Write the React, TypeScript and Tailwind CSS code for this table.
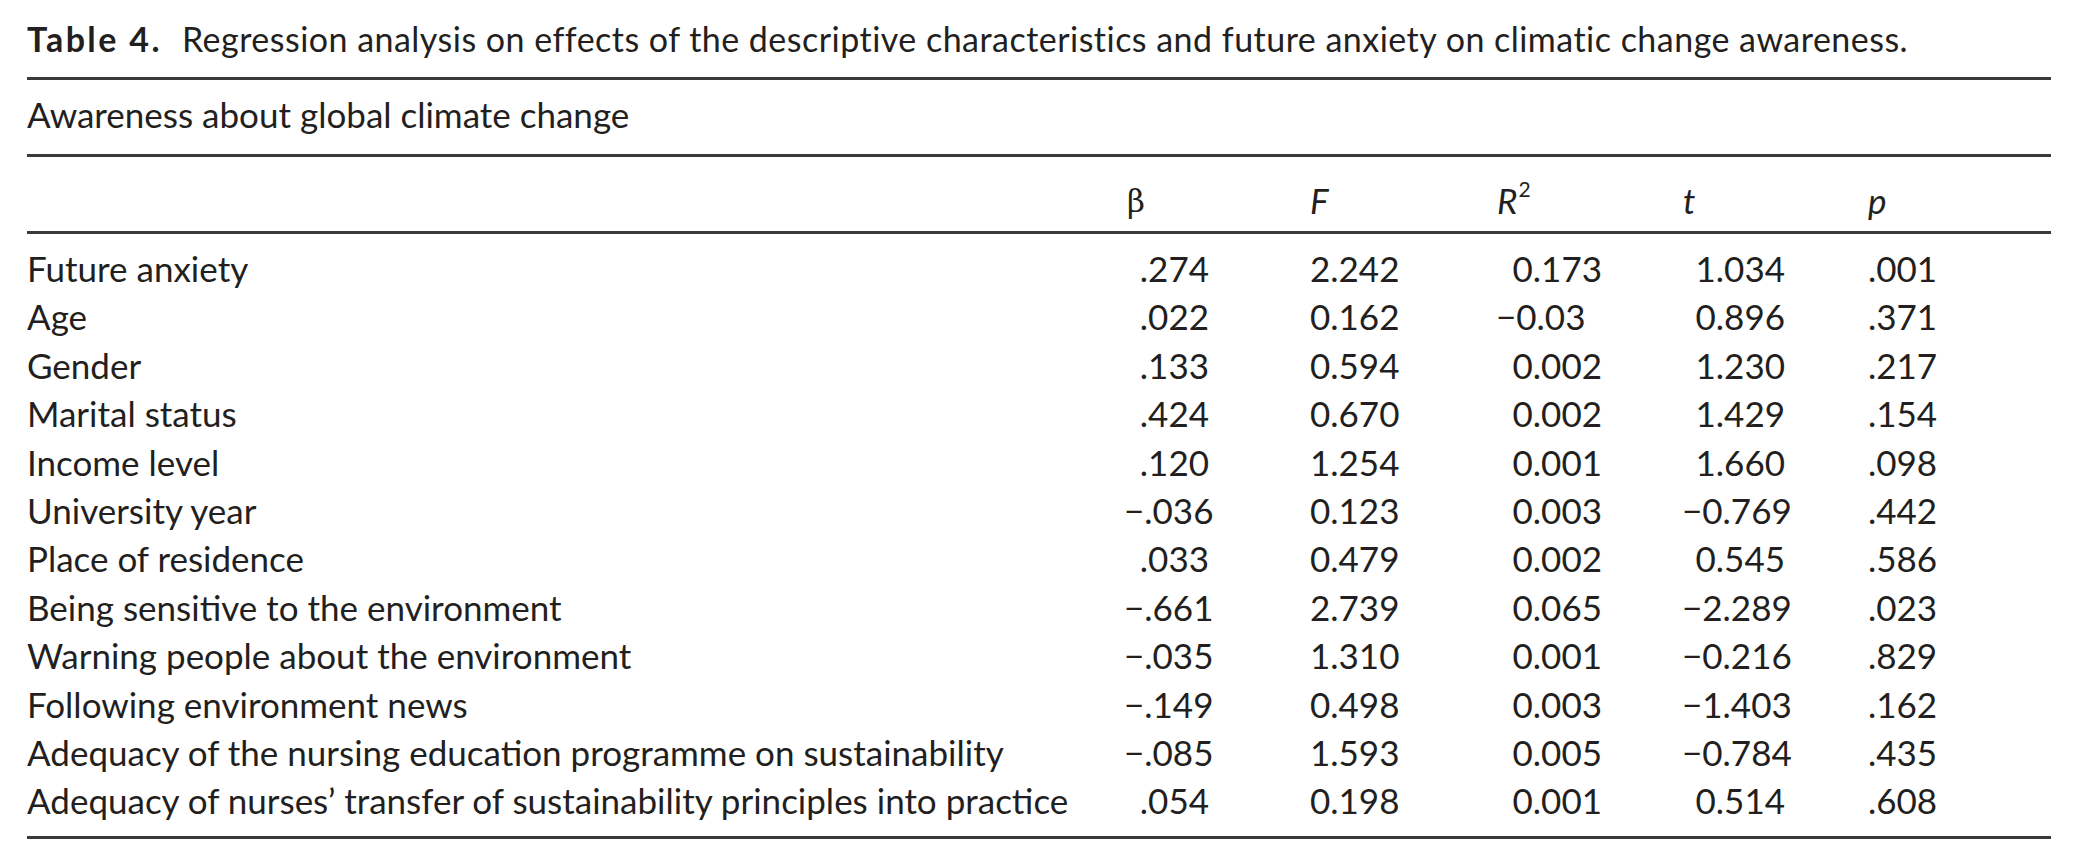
const rows: [string, string, string, string, string, string][] = [
  ["Future anxiety", ".274", "2.242", "0.173", "1.034", ".001"],
  ["Age", ".022", "0.162", "−0.03", "0.896", ".371"],
  ["Gender", ".133", "0.594", "0.002", "1.230", ".217"],
  ["Marital status", ".424", "0.670", "0.002", "1.429", ".154"],
  ["Income level", ".120", "1.254", "0.001", "1.660", ".098"],
  ["University year", "−.036", "0.123", "0.003", "−0.769", ".442"],
  ["Place of residence", ".033", "0.479", "0.002", "0.545", ".586"],
  ["Being sensitive to the environment", "−.661", "2.739", "0.065", "−2.289", ".023"],
  ["Warning people about the environment", "−.035", "1.310", "0.001", "−0.216", ".829"],
  ["Following environment news", "−.149", "0.498", "0.003", "−1.403", ".162"],
  ["Adequacy of the nursing education programme on sustainability", "−.085", "1.593", "0.005", "−0.784", ".435"],
  ["Adequacy of nurses’ transfer of sustainability principles into practice", ".054", "0.198", "0.001", "0.514", ".608"],
];

const grid = "grid grid-cols-[1097px_186px_186px_186px_186px_186px]";

function Rule() {
  return <div className="h-[3px] bg-[#3a3a3a]" />;
}

export default function App() {
  return (
    <div
      className="w-[2078px] h-[864px] bg-white text-[#231f20] px-[27px] overflow-hidden"
      style={{ fontFamily: "Lato, 'Open Sans', sans-serif" }}
    >
      <div className="h-[77px] pt-[19px] text-[34px] leading-[40px] whitespace-nowrap">
        <span className="font-bold tracking-[0.07em]">Table 4.</span>
        <span className="ml-[20px] tracking-[0.014em]">
          Regression analysis on effects of the descriptive characteristics and future anxiety on climatic change awareness.
        </span>
      </div>
      <Rule />
      <div className="h-[74px] pt-[10px] text-[35px] leading-[48px]">Awareness about global climate change</div>
      <Rule />
      <div className={`${grid} h-[74px] pt-[19px] text-[35px] leading-[48px]`}>
        <div />
        <div className="pl-[3px]" style={{ fontFamily: "'DejaVu Serif', serif" }}>
          <span className="text-[31px]">β</span>
        </div>
        <div className="italic">F</div>
        <div className="italic pl-[1px]">
          R<span className="not-italic align-top text-[21px] leading-none relative top-[2px] ml-[1px]">2</span>
        </div>
        <div className="italic pl-[1px]">t</div>
        <div className="italic">p</div>
      </div>
      <Rule />
      <div className="pt-[10px] pb-[11px] text-[35px]">
        {rows.map((r) => (
          <div key={r[0]} className={`${grid} h-[48.4px] leading-[48.4px] whitespace-nowrap`}>
            <div>{r[0]}</div>
            <div className="text-right pr-[101px]">{r[1]}</div>
            <div className="text-right pr-[103px]">{r[2]}</div>
            <div className="text-right pr-[80px]">
              {r[3]}
              {r[3].length === 5 && r[3].startsWith("−") ? <span className="invisible">0</span> : null}
            </div>
            <div className="text-right pr-[83px]">{r[4]}</div>
            <div>{r[5]}</div>
          </div>
        ))}
      </div>
      <Rule />
    </div>
  );
}
